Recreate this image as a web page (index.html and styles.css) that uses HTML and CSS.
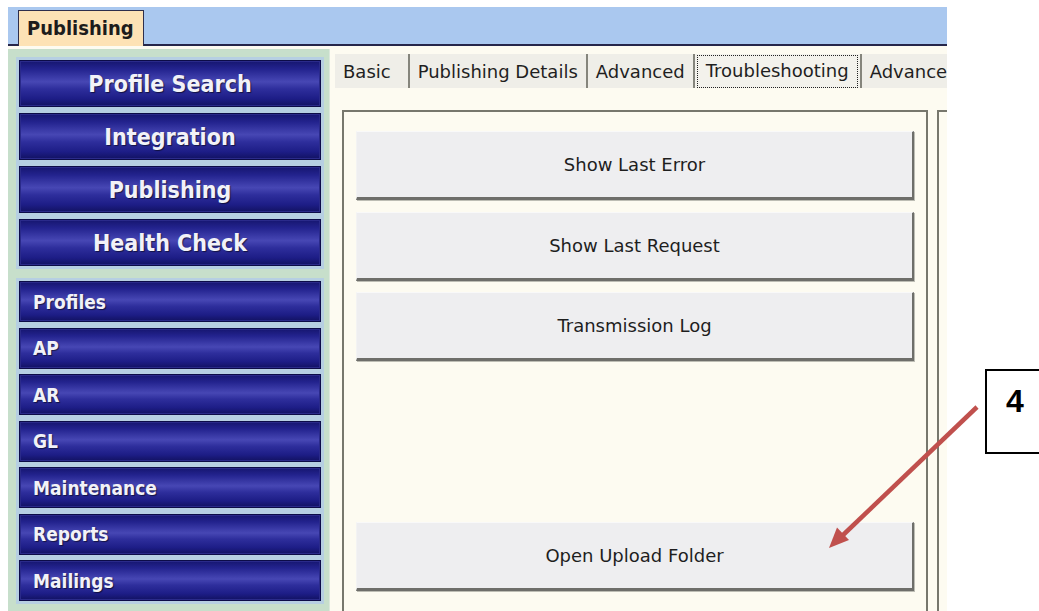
FILE: index.html
```html
<!DOCTYPE html>
<html lang="en">
<head>
<meta charset="utf-8">
<title>Publishing</title>
<link rel="stylesheet" href="styles.css">
</head>
<body>
<div class="app">
  <header class="topbar">
    <span class="topbar-edge"></span>
    <div class="doc-tab">Publishing</div>
    <span class="topbar-fill"></span>
  </header>
  <div class="workspace">
    <nav class="sidebar">
      <div class="nav-group nav-major">
        <button class="nav-btn">Profile Search</button>
        <button class="nav-btn">Integration</button>
        <button class="nav-btn">Publishing</button>
        <button class="nav-btn">Health Check</button>
      </div>
      <div class="nav-group nav-minor">
        <button class="nav-btn">Profiles</button>
        <button class="nav-btn">AP</button>
        <button class="nav-btn">AR</button>
        <button class="nav-btn">GL</button>
        <button class="nav-btn">Maintenance</button>
        <button class="nav-btn">Reports</button>
        <button class="nav-btn">Mailings</button>
      </div>
    </nav>
    <section class="main">
      <div class="tabs">
        <span class="tab tab-first">Basic</span>
        <span class="tab">Publishing Details</span>
        <span class="tab">Advanced</span>
        <span class="tab tab-active"><span class="focus-ring">Troubleshooting</span></span>
        <span class="tab">Advanced</span>
      </div>
      <div class="pages">
        <div class="page">
          <button class="action">Show Last Error</button>
          <button class="action">Show Last Request</button>
          <button class="action">Transmission Log</button>
          <button class="action action-last">Open Upload Folder</button>
        </div>
        <div class="page page-side"></div>
      </div>
    </section>
  </div>
</div>

<div class="callout">4</div>
<svg class="pointer" width="1039" height="611" viewBox="0 0 1039 611" aria-hidden="true">
  <line x1="977" y1="407" x2="842" y2="536" stroke="#c0504d" stroke-width="4.5"/>
  <polygon points="829,548 849,540 837,527.5" fill="#c0504d"/>
</svg>
</body>
</html>
```

FILE: styles.css
```css
* {
  box-sizing: border-box;
}

html,
body {
  margin: 0;
  padding: 0;
  background: #ffffff;
  overflow: hidden;
}

body {
  width: 1039px;
  height: 611px;
  position: relative;
  font-family: "DejaVu Sans", "Liberation Sans", sans-serif;
}

.app {
  margin: 7px 0 0 8px;
  width: 939px;
  height: 604px;
  overflow: hidden;
  display: flex;
  flex-direction: column;
  background: #fdfbf1;
}

/* title strip with the document tab */
.topbar {
  height: 39px;
  display: flex;
  align-items: flex-end;
  background: #aac8ef;
  flex-shrink: 0;
}

.topbar-edge {
  width: 10px;
  border-bottom: 2px solid #26264a;
}

.topbar-fill {
  flex: 1;
  border-bottom: 2px solid #26264a;
}

.doc-tab {
  height: 36px;
  padding: 0 9px 0 8px;
  background: #fde2b5;
  border: 1px solid #2e2e4c;
  border-bottom: none;
  font-weight: bold;
  font-stretch: condensed;
  font-size: 20px;
  line-height: 34px;
  color: #1c1c1c;
}

.workspace {
  flex: 1;
  display: flex;
  min-height: 0;
}

/* left navigation */
.sidebar {
  width: 322px;
  flex-shrink: 0;
  margin-top: 3px;
  padding: 11px 9px 0 11px;
  background: #c7dfcb;
  border-right: 1px solid #dce8dc;
}

.nav-group {
  display: flex;
  flex-direction: column;
}

.nav-major {
  gap: 6px;
}

.nav-minor {
  gap: 5.5px;
  margin-top: 15px;
}

.nav-btn {
  display: block;
  width: 302px;
  margin: 0;
  padding: 0;
  border: 1px solid #0c0c48;
  box-shadow: 0 0 0 3px #b6cfe2, inset 0 0 0 1px #2a2a8a;
  background: linear-gradient(to bottom,
      #161670 0%,
      #23238e 18%,
      #3d3daa 38%,
      #4747b4 46%,
      #2e2e9c 62%,
      #1d1d86 84%,
      #121262 100%);
  color: #f2f2f8;
  font-family: "DejaVu Sans", "Liberation Sans", sans-serif;
  font-weight: bold;
  font-stretch: condensed;
  text-shadow: 1px 1px 1px rgba(0, 0, 0, 0.55);
  cursor: pointer;
}

.nav-major .nav-btn {
  height: 47px;
  font-size: 23px;
  text-align: center;
}

.nav-minor .nav-btn {
  height: 41px;
  font-size: 19px;
  text-align: left;
  padding-left: 13px;
}

/* tab strip and pages */
.main {
  flex: 1;
  min-width: 0;
  display: flex;
  flex-direction: column;
  overflow: hidden;
}

.tabs {
  display: flex;
  margin: 8px 0 0 5px;
  height: 34px;
  white-space: nowrap;
}

.tab {
  display: flex;
  align-items: center;
  padding: 0 8px;
  background: #efeee8;
  border-right: 2px solid #85857c;
  font-size: 18px;
  color: #1f1f1f;
  flex-shrink: 0;
}

.tab-first {
  padding-right: 17px;
}

.tab-active {
  padding: 0 2px;
  background: #f3f2ec;
}

.focus-ring {
  display: block;
  padding: 3px 8px 4px;
  border: 1px dotted #222;
  line-height: 24px;
}

.pages {
  display: flex;
  gap: 9px;
  margin-top: 22px;
  padding-left: 12px;
  flex: 1;
  min-height: 0;
}

.page {
  width: 586px;
  flex-shrink: 0;
  border: 2px solid #77776d;
  border-bottom: none;
  padding: 19px 12px 0;
  display: flex;
  flex-direction: column;
  gap: 11.5px;
}

.page-side {
  width: 60px;
  border-right: none;
}

.action {
  display: block;
  width: 100%;
  height: 69px;
  margin: 0;
  padding: 0;
  background: #eeeef0;
  border-top: 1px solid #f9f9f9;
  border-left: 1px solid #f3f3f3;
  border-right: 2px solid #6e6e6a;
  border-bottom: 3px solid #6e6e6a;
  box-shadow: 1px 1px 0 #bdbdb4;
  font-family: "DejaVu Sans", "Liberation Sans", sans-serif;
  font-size: 18px;
  color: #1e1e1e;
  cursor: pointer;
}

.action-last {
  margin-top: 149px;
}

/* annotation drawn over the window */
.callout {
  position: absolute;
  left: 985px;
  top: 369px;
  width: 80px;
  height: 85px;
  border: 2px solid #000;
  background: #fff;
  padding: 14px 0 0 19px;
  font-family: "Liberation Sans", Arial, sans-serif;
  font-weight: bold;
  font-size: 32px;
  line-height: 32px;
  color: #000;
}

.pointer {
  position: absolute;
  left: 0;
  top: 0;
  pointer-events: none;
}
```
